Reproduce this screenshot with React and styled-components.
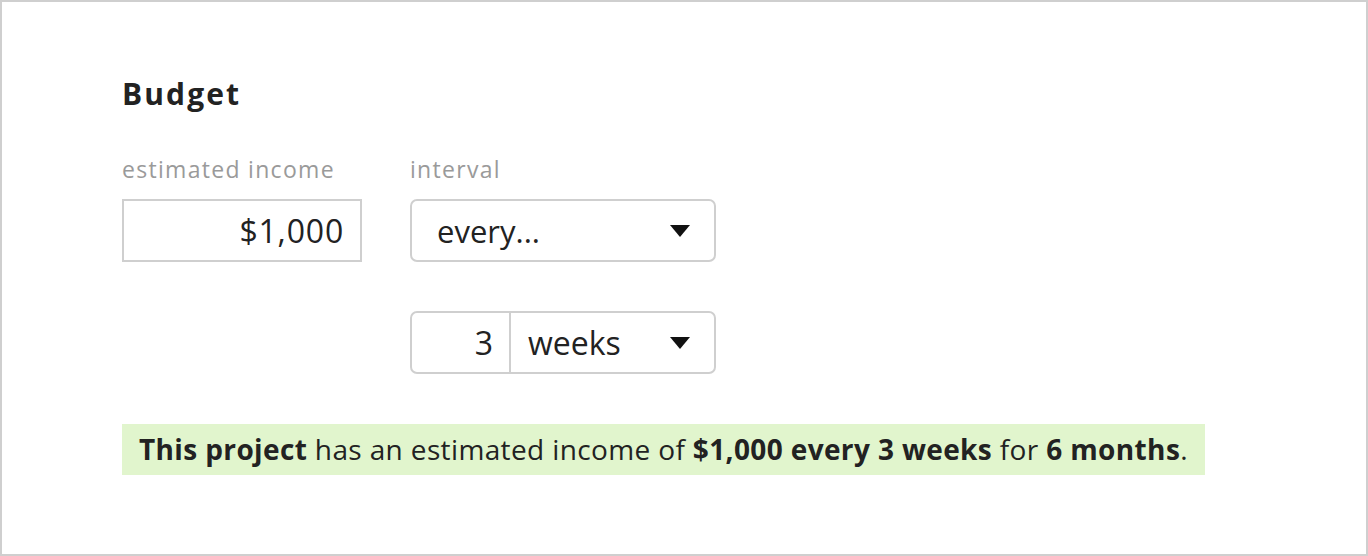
import React from 'react'
import styled, { createGlobalStyle } from 'styled-components'

const GlobalStyle = createGlobalStyle`
  html, body {
    margin: 0;
    padding: 0;
    background: #fff;
  }
  body {
    font-family: "Open Sans", "Noto Sans", sans-serif;
    color: #222;
  }
`

function Caret() {
  return (
    <svg width="20" height="12" viewBox="0 0 20 12">
      <polygon points="0,0 20,0 10,12" fill="#111" />
    </svg>
  )
}

function App() {
  return (
    <>
      <GlobalStyle />
      <Frame>
        <Heading>Budget</Heading>
        <Fields>
          <Field>
            <Label>estimated income</Label>
            <AmountBox>$1,000</AmountBox>
          </Field>
          <Field>
            <Label>interval</Label>
            <Select>
              <span>every...</span>
              <Caret />
            </Select>
            <Combo>
              <NumberBox>3</NumberBox>
              <ComboSelect>
                <span>weeks</span>
                <Caret />
              </ComboSelect>
            </Combo>
          </Field>
        </Fields>
        <Summary>
          <b>This project</b> has an estimated income of <b>$1,000 every 3 weeks</b> for <b>6 months</b>.
        </Summary>
      </Frame>
    </>
  )
}

const Frame = styled.main`
  box-sizing: border-box;
  width: 1368px;
  height: 556px;
  border: 2px solid #cfcfcf;
  padding: 70px 120px 0;
`

const Heading = styled.h2`
  margin: 0;
  font-size: 30px;
  font-weight: 700;
  letter-spacing: 2.1px;
  line-height: 44px;
  color: #222;
`

const Fields = styled.div`
  display: flex;
  gap: 48px;
  margin-top: 38px;
`

const Field = styled.div`
  display: flex;
  flex-direction: column;
`

const Label = styled.div`
  font-size: 23px;
  letter-spacing: 1.3px;
  line-height: 30px;
  color: #9a9a9a;
  margin-bottom: 15px;
`

const AmountBox = styled.div`
  box-sizing: border-box;
  width: 240px;
  height: 63px;
  border: 2px solid #cfcfcf;
  padding: 0 16px;
  display: flex;
  align-items: center;
  justify-content: flex-end;
  font-size: 32px;
  letter-spacing: 0.8px;
  color: #222;
`

const Select = styled.div`
  box-sizing: border-box;
  width: 306px;
  height: 63px;
  border: 2px solid #cfcfcf;
  border-radius: 7px;
  padding: 0 24px 0 25px;
  display: flex;
  align-items: center;
  justify-content: space-between;
  font-size: 31px;
  color: #222;
`

const Combo = styled.div`
  box-sizing: border-box;
  width: 306px;
  height: 63px;
  margin-top: 49px;
  border: 2px solid #cfcfcf;
  border-radius: 7px;
  display: flex;
  font-size: 32px;
  color: #222;
`

const NumberBox = styled.div`
  box-sizing: border-box;
  width: 99px;
  border-right: 2px solid #cfcfcf;
  padding: 0 16px;
  display: flex;
  align-items: center;
  justify-content: flex-end;
`

const ComboSelect = styled.div`
  flex: 1;
  padding: 0 24px 0 17px;
  display: flex;
  align-items: center;
  justify-content: space-between;
`

const Summary = styled.p`
  display: inline-block;
  margin: 50px 0 0;
  padding: 8px 17px;
  background: #e1f5cd;
  font-size: 28px;
  letter-spacing: 0.37px;
  line-height: 35px;
  color: #222;
  b {
    font-weight: 700;
  }
`

export default App
